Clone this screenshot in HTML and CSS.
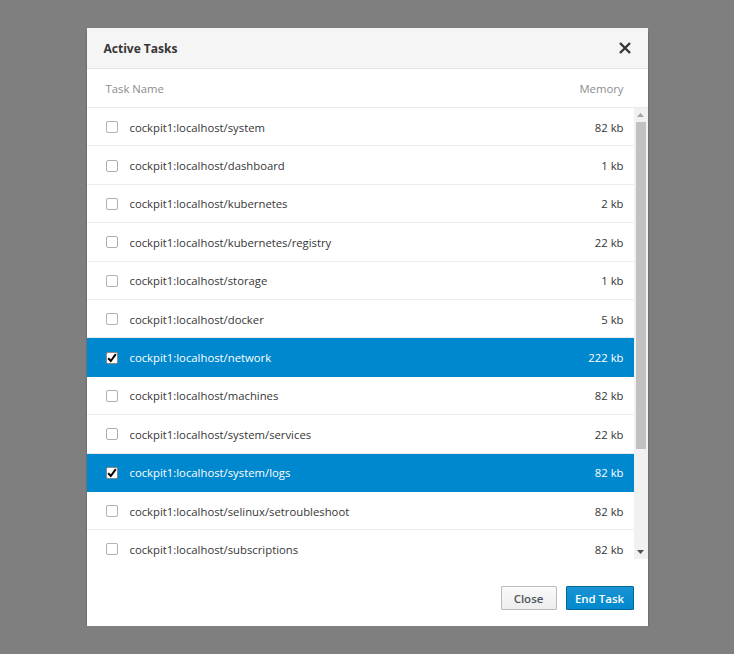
FILE: index.html
```html
<!DOCTYPE html>
<html lang="en">
<head>
<meta charset="utf-8">
<title>Active Tasks</title>
<link rel="stylesheet" href="styles.css">
</head>
<body>
<div class="modal">
  <div class="modal-header">
    <h1 class="modal-title">Active Tasks</h1>
    <button class="close-btn" aria-label="Close">
      <svg width="14" height="14" viewBox="0 0 14 14"><path d="M2 2 L12 12 M12 2 L2 12" stroke="#363636" stroke-width="2.4" stroke-linecap="butt" fill="none"/></svg>
    </button>
  </div>
  <div class="col-head">
    <span>Task Name</span>
    <span>Memory</span>
  </div>
  <div class="scroll">
    <ul class="rows">
      <li class="row"><span class="cb"></span><span class="name">cockpit1:localhost/system</span><span class="mem">82 kb</span></li>
      <li class="row"><span class="cb"></span><span class="name">cockpit1:localhost/dashboard</span><span class="mem">1 kb</span></li>
      <li class="row"><span class="cb"></span><span class="name">cockpit1:localhost/kubernetes</span><span class="mem">2 kb</span></li>
      <li class="row"><span class="cb"></span><span class="name">cockpit1:localhost/kubernetes/registry</span><span class="mem">22 kb</span></li>
      <li class="row"><span class="cb"></span><span class="name">cockpit1:localhost/storage</span><span class="mem">1 kb</span></li>
      <li class="row"><span class="cb"></span><span class="name">cockpit1:localhost/docker</span><span class="mem">5 kb</span></li>
      <li class="row selected"><span class="cb checked"><svg width="10" height="10" viewBox="0 0 10 10"><path d="M1.2 5.2 L3.8 8 L8.8 1.2" stroke="#000" stroke-width="2" fill="none"/></svg></span><span class="name">cockpit1:localhost/network</span><span class="mem">222 kb</span></li>
      <li class="row"><span class="cb"></span><span class="name">cockpit1:localhost/machines</span><span class="mem">82 kb</span></li>
      <li class="row"><span class="cb"></span><span class="name">cockpit1:localhost/system/services</span><span class="mem">22 kb</span></li>
      <li class="row selected"><span class="cb checked"><svg width="10" height="10" viewBox="0 0 10 10"><path d="M1.2 5.2 L3.8 8 L8.8 1.2" stroke="#000" stroke-width="2" fill="none"/></svg></span><span class="name">cockpit1:localhost/system/logs</span><span class="mem">82 kb</span></li>
      <li class="row"><span class="cb"></span><span class="name">cockpit1:localhost/selinux/setroubleshoot</span><span class="mem">82 kb</span></li>
      <li class="row"><span class="cb"></span><span class="name">cockpit1:localhost/subscriptions</span><span class="mem">82 kb</span></li>
    </ul>
    <div class="scrollbar">
      <div class="sb-arrow"><svg width="7" height="4" viewBox="0 0 7 4"><path d="M0 4 L3.5 0 L7 4 Z" fill="#a3a3a3"/></svg></div>
      <div class="sb-track"><div class="sb-thumb"></div></div>
      <div class="sb-arrow"><svg width="7" height="4" viewBox="0 0 7 4"><path d="M0 0 L7 0 L3.5 4 Z" fill="#505050"/></svg></div>
    </div>
  </div>
  <div class="modal-footer">
    <button class="btn btn-default">Close</button>
    <button class="btn btn-primary">End Task</button>
  </div>
</div>
</body>
</html>
```
FILE: styles.css
```css
* { box-sizing: border-box; }
html, body {
  margin: 0;
  padding: 0;
  background: #7f7f7f;
  font-family: "Open Sans", "Liberation Sans", sans-serif;
  color: #363636;
}
.modal {
  width: 561px;
  margin: 28px auto 0;
  background: #fff;
  box-shadow: 0 3px 2px rgba(0,0,0,0.35);
}
.modal-header {
  height: 41px;
  background: #f5f5f5;
  border-bottom: 1px solid #e4e4e4;
  display: flex;
  align-items: center;
  justify-content: space-between;
  padding: 0 16px 0 17px;
}
.modal-title {
  margin: 0;
  font-size: 12px;
  font-weight: 700;
  color: #363636;
}
.close-btn {
  border: 0;
  background: none;
  padding: 0;
  width: 14px;
  height: 14px;
  display: flex;
}
.col-head {
  height: 39px;
  display: flex;
  align-items: center;
  justify-content: space-between;
  padding: 1px 24px 0 19px;
  font-size: 11.3px;
  color: #8b8d8f;
  border-bottom: 1px solid #ebebeb;
}
.scroll {
  height: 451px;
  display: flex;
  overflow: hidden;
}
.rows {
  list-style: none;
  margin: 0;
  padding: 0;
  flex: 1;
}
.row {
  height: 38.4px;
  border-bottom: 1px solid #ededed;
  display: flex;
  align-items: center;
  padding: 1px 10px 0 19px;
  font-size: 11.3px;
  color: #363636;
}
.row.selected {
  background: #0088ce;
  border-bottom-color: #0088ce;
  color: #fff;
}
.cb {
  width: 12px;
  height: 12px;
  border: 1px solid #b0b0b0;
  border-radius: 2px;
  background: #fff;
  margin-right: 12px;
  display: flex;
  align-items: center;
  justify-content: center;
  flex: none;
}
.cb.checked { border-color: #8a8a8a; }
.name { flex: 1; }
.mem { text-align: right; }
.scrollbar {
  width: 14px;
  background: #f1f1f1;
  display: flex;
  flex-direction: column;
}
.sb-arrow {
  height: 14px;
  display: flex;
  align-items: center;
  justify-content: center;
}
.sb-track {
  flex: 1;
  padding: 0 2px;
}
.sb-thumb {
  height: 327px;
  background: #c1c1c1;
}
.modal-footer {
  display: flex;
  justify-content: flex-end;
  gap: 9px;
  padding: 27px 14px 16px 0;
}
.btn {
  height: 24px;
  font-family: inherit;
  font-size: 11.5px;
  font-weight: 600;
  border-radius: 1px;
  padding: 1px 0 0;
  line-height: 20px;
}
.btn-default {
  width: 56px;
  background: linear-gradient(#fafafa, #ededed);
  border: 1px solid #bbb;
  color: #4d5258;
}
.btn-primary {
  width: 68px;
  background: linear-gradient(#1a93d3, #0088ce);
  border: 1px solid #00659c;
  color: #fff;
}
```
